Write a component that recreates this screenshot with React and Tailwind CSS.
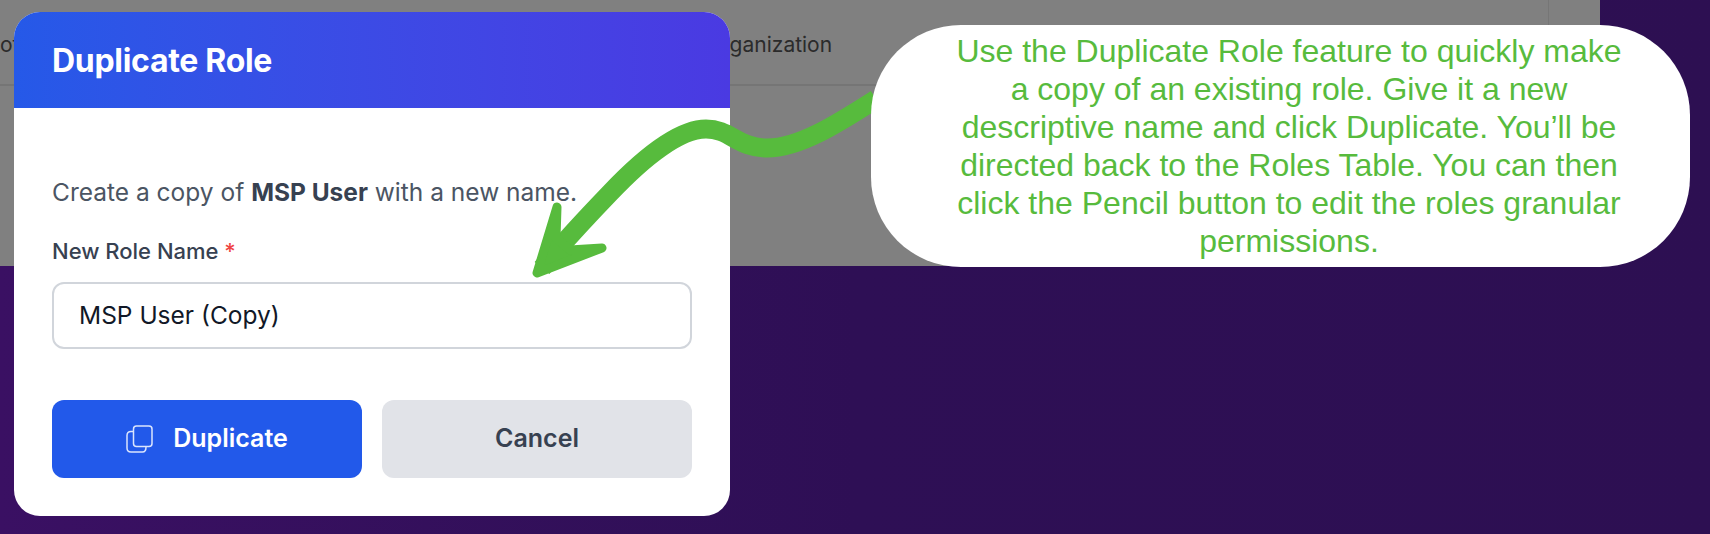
const InterFont = 'font-["Inter",sans-serif]';

const CopyIcon = () => (
  <svg className="w-[27px] h-[28px] shrink-0" viewBox="0 0 27 28" fill="none" stroke="#dbe5fd" strokeWidth="1.5" strokeLinecap="round" strokeLinejoin="round">
    <rect x="7.5" y="1" width="18.5" height="20.5" rx="3" />
    <path d="M7 6.5H5C2.6 6.5 1 8.1 1 10.5v12.5c0 2.4 1.6 4 4 4h11.5c2.2 0 3.5-1.6 3.5-5" />
  </svg>
);

const Arrow = () => (
  <svg className="absolute left-0 top-0 pointer-events-none" width="1710" height="534" viewBox="0 0 1710 534" fill="none">
    <path d="M876 99C840 122 800 148 767 148C738 148 730 129 706 129C680 129 645 156 610 193C585 219 560 246 542 268" stroke="#57bb3d" strokeWidth="19" />
    <path d="M557 207L537 273L602 248L570 250L556 238Z" fill="#57bb3d" stroke="#57bb3d" strokeWidth="9" strokeLinejoin="round" />
  </svg>
);

const Modal = () => (
  <div className={`absolute left-[14px] top-[12px] w-[716px] h-[504px] flex flex-col rounded-[26px] bg-white overflow-hidden ${InterFont}`}>
    <div className="h-[96px] shrink-0 flex items-center px-[38px] pt-[1px] bg-gradient-to-r from-[#2559e8] to-[#4a3ae2]">
      <h2 className="text-[32px] font-bold text-white tracking-[-0.3px]">Duplicate Role</h2>
    </div>
    <div className="flex flex-col px-[38px] pt-[66px]">
      <p className="text-[24.5px] leading-[36px] text-[#4b5563]">
        Create a copy of <strong className="font-bold text-[#374151]">MSP User</strong> with a new name.
      </p>
      <label className="mt-[27px] text-[22px] leading-[28px] font-medium text-[#374151]">
        New Role Name <span className="text-[#ef4444]">*</span>
      </label>
      <div className="mt-[17px] h-[67px] flex items-center px-[25px] rounded-[12px] border-2 border-[#d1d5db] text-[24.5px] text-[#111827]">
        MSP User (Copy)
      </div>
      <div className="mt-[51px] grid grid-cols-2 gap-[20px]">
        <button className="h-[78px] flex items-center justify-center gap-[20px] rounded-[12px] bg-[#2259ea] text-[25px] font-semibold text-white">
          <CopyIcon />
          Duplicate
        </button>
        <button className="h-[78px] flex items-center justify-center rounded-[12px] bg-[#e1e3e8] text-[25px] font-semibold text-[#374151]">
          Cancel
        </button>
      </div>
    </div>
  </div>
);

export default function App() {
  return (
    <div className="relative w-[1710px] h-[534px] overflow-hidden bg-gradient-to-r from-[#3a1063] via-[#2e0f55] to-[#2d0f52]">
      {/* Dimmed page behind the dialog */}
      <div className={`w-[1600px] h-[266px] bg-[#808080] ${InterFont}`}>
        <div className="w-[1549px] h-[266px] border-r border-[#767676]">
          <div className="h-[86px] flex items-center border-b-2 border-[#757575] pt-[6px] text-[21px] text-[#2b2b2b]">
            <span className="w-[706px]">ot</span>
            <span>Organization</span>
          </div>
        </div>
      </div>

      <Modal />
      <Arrow />

      {/* Callout */}
      <div className='absolute left-[871px] top-[25px] w-[819px] h-[242px] pl-[17px] rounded-[90px] bg-white flex items-center justify-center text-center font-["Liberation_Sans",Arial,sans-serif] text-[32px] leading-[38px] text-[#57bb3d]'>
        <p className="w-[672px]">
          Use the Duplicate Role feature to quickly make a copy of an existing role. Give it a new descriptive name and click Duplicate. You’ll be directed back to the Roles Table. You can then click the Pencil button to edit the roles granular permissions.
        </p>
      </div>
    </div>
  );
}
